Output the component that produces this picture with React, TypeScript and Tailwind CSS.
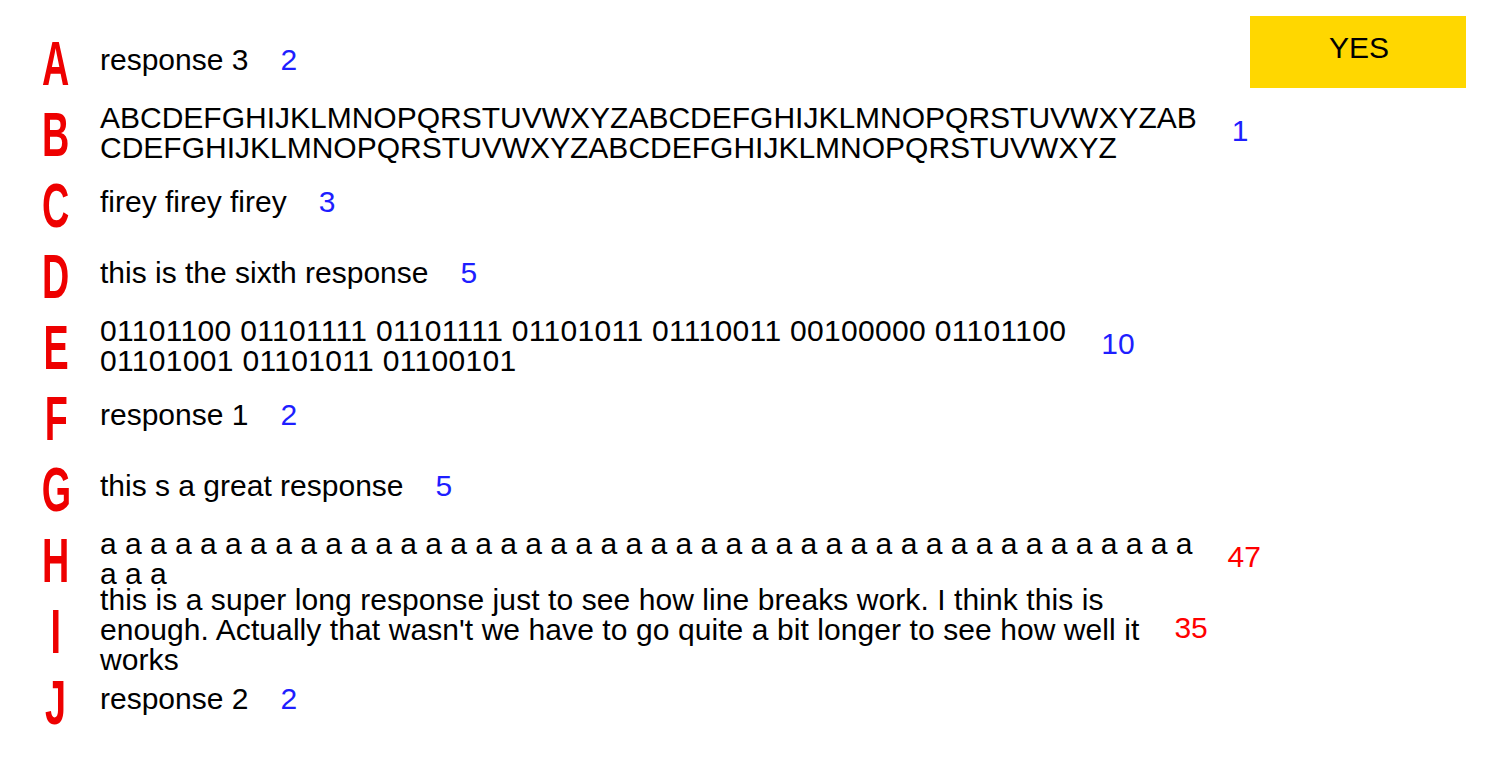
import * as React from 'react'

type Response = {
  letter: string
  text: string
  lines: string[]
  extra?: string
}

const responses: Response[] = [
  { letter: 'A', text: 'response 3', lines: ['response 3'] },
  {
    letter: 'B',
    text: 'ABCDEFGHIJKLMNOPQRSTUVWXYZABCDEFGHIJKLMNOPQRSTUVWXYZABCDEFGHIJKLMNOPQRSTUVWXYZABCDEFGHIJKLMNOPQRSTUVWXYZ',
    lines: [
      'ABCDEFGHIJKLMNOPQRSTUVWXYZABCDEFGHIJKLMNOPQRSTUVWXYZAB',
      'CDEFGHIJKLMNOPQRSTUVWXYZABCDEFGHIJKLMNOPQRSTUVWXYZ',
    ],
  },
  { letter: 'C', text: 'firey firey firey', lines: ['firey firey firey'] },
  { letter: 'D', text: 'this is the sixth response', lines: ['this is the sixth response'] },
  {
    letter: 'E',
    text: '01101100 01101111 01101111 01101011 01110011 00100000 01101100 01101001 01101011 01100101',
    lines: [
      '01101100 01101111 01101111 01101011 01110011 00100000 01101100',
      '01101001 01101011 01100101',
    ],
    extra: 'tracking-[0.32px]',
  },
  { letter: 'F', text: 'response 1', lines: ['response 1'] },
  { letter: 'G', text: 'this s a great response', lines: ['this s a great response'] },
  {
    letter: 'H',
    text: Array(47).fill('a').join(' '),
    lines: [Array(44).fill('a').join(' '), 'a a a'],
  },
  {
    letter: 'I',
    text: "this is a super long response just to see how line breaks work. I think this is enough. Actually that wasn't we have to go quite a bit longer to see how well it works",
    lines: [
      'this is a super long response just to see how line breaks work. I think this is',
      "enough. Actually that wasn't we have to go quite a bit longer to see how well it",
      'works',
    ],
    extra: 'tracking-[0.08px]',
  },
  { letter: 'J', text: 'response 2', lines: ['response 2'] },
]

function wordCount(text: string) {
  return text.trim().split(/\s+/).length
}

function ResponseRow({ letter, text, lines, extra }: Response) {
  const count = wordCount(text)
  const multi = lines.length > 1
  return (
    <div className="flex items-center h-[71px]">
      <div className="w-[28px] ml-[42px] mt-[8px] flex justify-center shrink-0">
        <span className="inline-block scale-x-[0.6] text-[63px] leading-none font-bold text-[#ee0000]">
          {letter}
        </span>
      </div>
      <div
        className={
          (multi
            ? 'ml-[30px] mt-[4px] text-[30px] leading-[30px] text-black whitespace-nowrap '
            : 'ml-[30px] text-[30px] leading-[31px] text-black whitespace-nowrap ') + (extra ?? '')
        }
      >
        {lines.map((l, i) => (
          <div key={i}>{l}</div>
        ))}
      </div>
      <div
        className={
          (multi ? 'ml-[35px] ' : 'ml-[32px] ') +
          (count > 20
            ? 'text-[30px] leading-[31px] text-[#ff0000]'
            : 'text-[30px] leading-[31px] text-[#1e1eff]')
        }
      >
        {count}
      </div>
    </div>
  )
}

export default function App() {
  return (
    <div className="grid bg-white min-h-[772px] font-['Liberation_Sans',Arial,sans-serif]">
      <div className="col-start-1 row-start-1 flex flex-col pt-[24px]">
        {responses.map((r) => (
          <ResponseRow key={r.letter} {...r} />
        ))}
      </div>
      <button className="col-start-1 row-start-1 self-start justify-self-end mt-[16px] mr-[42px] w-[216px] h-[72px] bg-[#ffd700] pb-[10px] pl-[2px] text-center text-[30px] leading-[31px] text-black">
        YES
      </button>
    </div>
  )
}
